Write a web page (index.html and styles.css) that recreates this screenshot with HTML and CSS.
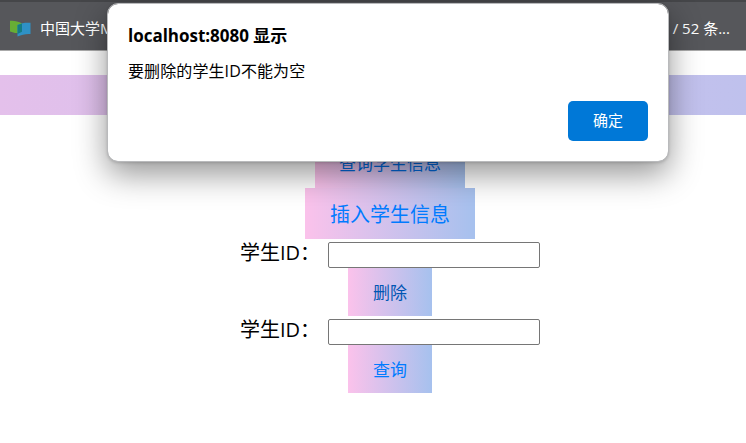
FILE: index.html
```html
<!DOCTYPE html>
<html lang="zh-CN">
<head>
<meta charset="utf-8">
<title>学生信息</title>
<link rel="stylesheet" href="styles.css">
</head>
<body>
<header class="bookmarks">
  <div class="bookmark">
    <svg class="logo" width="21" height="17" viewBox="0 0 21 17">
      <path d="M0 .8C4 .4 8 1.2 12 3.5V11.5C8 14 4 13 0 11.5Z" fill="#67ad35"/>
      <path d="M7.5 5C12 2.6 16 2.6 20.5 2.8V14C16 13.6 12 14.5 7.5 16.5Z" fill="#2e91c5"/>
      <path d="M7.5 5 12 3.5V11.8L7.5 14Z" fill="#147c83"/>
    </svg>
    <span>中国大学M</span>
  </div>
  <span class="bookmark-end">信 / 52 条...</span>
</header>
<div class="banner"></div>
<main class="content">
  <button class="action list">查询学生信息</button>
  <button class="action insert">插入学生信息</button>
  <label class="field"><span class="caption">学生ID：</span><input type="text"></label>
  <button class="action pressed">删除</button>
  <label class="field"><span class="caption">学生ID：</span><input type="text"></label>
  <button class="action">查询</button>
</main>
<section class="dialog" role="alertdialog">
  <h1>localhost:8080 显示</h1>
  <p>要删除的学生ID不能为空</p>
  <button class="confirm">确定</button>
</section>
</body>
</html>
```
FILE: styles.css
```css
* { box-sizing: border-box; }
body {
  margin: 0;
  height: 443px;
  overflow: hidden;
  background: #fff;
  color: #000;
  font-family: "Open Sans", "Noto Sans CJK SC", sans-serif;
}
button { font-family: inherit; border: 0; margin: 0; }
.bookmarks {
  display: flex;
  align-items: center;
  justify-content: space-between;
  height: 51px;
  padding: 3px 16px 0 10px;
  background: #56575b;
  border-top: 2px solid #454649;
  border-bottom: 1px solid #aaa;
  color: #fff;
  font-size: 15px;
  line-height: 20px;
  white-space: nowrap;
}
.bookmark { display: flex; align-items: center; gap: 9px; }
.logo { margin-top: 1px; }
.bookmark-end { font-size: 15px; }
.banner {
  height: 40px;
  margin-top: 24px;
  background: linear-gradient(to right, #e4c0eb, #bfc1ed);
}
.content {
  display: flex;
  flex-direction: column;
  align-items: center;
  width: 780px;
  padding-top: 25px;
}
.action {
  flex: none;
  width: 84px;
  height: 48px;
  padding: 1px 0 0;
  background: linear-gradient(to right, #fbc2eb, #a6c1ee);
  color: #007bff;
  font-size: 17px;
  line-height: 24px;
  font-weight: 400;
}
.pressed { color: #0056b3; }
.list { width: 150px; padding-top: 0; color: #0068d9; }
.insert { width: 170px; height: 51px; padding-top: 2px; font-size: 20px; }
.field {
  display: flex;
  width: 300px;
  height: 29px;
  padding-top: 3px;
  font-size: 20px;
  line-height: 22px;
}
.caption { width: 88px; white-space: nowrap; }
.field input {
  width: 212px;
  height: 26px;
  border: 1px solid #767676;
  border-radius: 2px;
  background: #fff;
}
.dialog {
  position: absolute;
  top: 3px;
  left: 107px;
  display: flex;
  flex-direction: column;
  width: 562px;
  height: 159px;
  padding: 20px 20px 0;
  background: #fff;
  background-clip: padding-box;
  border: 1px solid #b9babc;
  border-radius: 11px;
  box-shadow: 0 12px 32px rgba(0, 0, 0, .42), 0 1px 3px rgba(0, 0, 0, .15);
}
.dialog h1 { margin: 0; font-size: 17px; line-height: 24px; letter-spacing: -.02px; }
.dialog p { margin: 11px 0 0; font-size: 16px; line-height: 24px; letter-spacing: .1px; }
.confirm {
  align-self: flex-end;
  width: 80px;
  height: 40px;
  margin-top: 18px;
  padding: 0 0 3px;
  border-radius: 5px;
  background: #0078d7;
  color: #fff;
  font-size: 15px;
}
```
